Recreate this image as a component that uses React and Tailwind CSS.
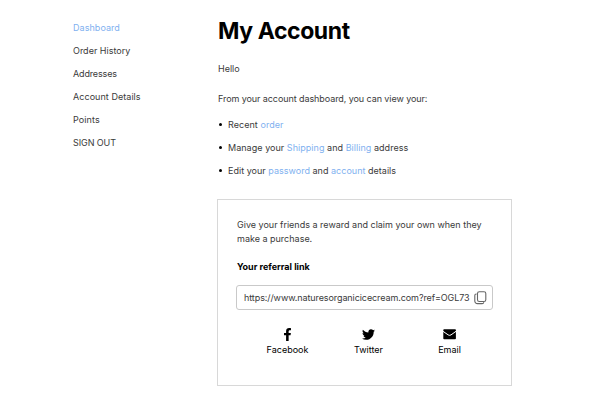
import { FaFacebookF, FaTwitter } from "react-icons/fa";

const navItems = [
  { label: "Dashboard", active: true, spacing: "tracking-[0.05px]" },
  { label: "Order History", spacing: "tracking-normal" },
  { label: "Addresses", spacing: "tracking-[-0.15px]" },
  { label: "Account Details", spacing: "tracking-[0.05px]" },
  { label: "Points", spacing: "tracking-[0.1px]" },
  { label: "SIGN OUT", spacing: "tracking-[-0.08px]" },
];

const shareItems = [
  { label: "Facebook", icon: <FaFacebookF className="h-[13px] w-[13px]" /> },
  { label: "Twitter", icon: <FaTwitter className="h-[13px] w-[13px]" /> },
  { label: "Email", icon: <EnvelopeIcon /> },
];

function Link({ children }) {
  return (
    <a href="#" className="text-[#7fb1f0]">
      {children}
    </a>
  );
}

function EnvelopeIcon() {
  return (
    <svg viewBox="0 0 13 13" className="h-[13px] w-[13px]">
      <rect x="0.3" y="1.2" width="12.6" height="10" rx="0.8" fill="#000" />
      <path
        d="M0 3.3l5.2 3.6q1.4.9 2.8 0L13 3.3"
        fill="none"
        stroke="#fff"
        strokeWidth="1"
      />
    </svg>
  );
}

function CopyIcon() {
  return (
    <svg
      viewBox="0 0 13 14"
      className="h-[14px] w-[13px] shrink-0"
      fill="none"
      stroke="#666666"
      strokeWidth="1.1"
      strokeLinecap="round"
    >
      <rect x="3.5" y="0.7" width="8.3" height="9.8" rx="1.8" />
      <path d="M2.2 3C1.2 3 .8 3.7.8 4.6V10a2.6 2.6 0 0 0 2.6 2.6h4.8c.8 0 1.4-.4 1.5-1" />
    </svg>
  );
}

export default function App() {
  return (
    <div className="flex h-[400px] w-[600px] overflow-hidden bg-white font-['Inter',sans-serif] text-[9px] text-[#3a3a3a]">
      {/* Account navigation */}
      <nav className="w-[217px] shrink-0 pt-[16px] pl-[73px]">
        <ul>
          {navItems.map((item) => (
            <li
              key={item.label}
              className={`h-[23px] leading-[23px] ${item.spacing} ${item.active ? "text-[#7fb1f0]" : ""}`}
            >
              {item.label}
            </li>
          ))}
        </ul>
      </nav>

      <main className="w-[295px] pt-[16px]">
        <h1 className="pl-px text-[23px] leading-[30px] font-bold tracking-[-0.42px] text-black">
          My Account
        </h1>
        <p className="mt-[15px] pl-px leading-[15px]">Hello</p>
        <p className="mt-[15px] pl-px leading-[15px] tracking-[-0.08px] whitespace-nowrap">
          From your account dashboard, you can view your:
        </p>
        <ul className="mt-[7px] pl-[2px] leading-[23px]">
          <li className="flex items-center gap-[6px]">
            <span className="h-[3px] w-[3px] rounded-full bg-black" />
            <span className="tracking-[0.05px]">
              Recent <Link>order</Link>
            </span>
          </li>
          <li className="flex items-center gap-[6px]">
            <span className="h-[3px] w-[3px] rounded-full bg-black" />
            <span className="tracking-[0.04px]">
              Manage your <Link>Shipping</Link> and <Link>Billing</Link> address
            </span>
          </li>
          <li className="flex items-center gap-[6px]">
            <span className="h-[3px] w-[3px] rounded-full bg-black" />
            <span className="tracking-[0.02px]">
              Edit your <Link>password</Link> and <Link>account</Link> details
            </span>
          </li>
        </ul>

        {/* Referral box */}
        <section className="mt-[17px] h-[187px] border border-[#d8d8d8] px-[18px] pt-[18px]">
          <p className="pl-px leading-[14px]">
            Give your friends a reward and claim your own when they
            <br />
            make a purchase.
          </p>
          <h2 className="mt-[13px] pl-px leading-[15px] font-bold text-black">
            Your referral link
          </h2>
          <div className="mt-[11px] flex h-[25px] items-center justify-between rounded-[3px] border border-[#c9c9c9] pr-[5px] pl-[7px]">
            <span className="tracking-[-0.09px] whitespace-nowrap">
              https://www.naturesorganicicecream.com?ref=OGL73
            </span>
            <CopyIcon />
          </div>
          <div className="mt-[18px] flex pl-[11px] text-black">
            {shareItems.map((item) => (
              <a
                key={item.label}
                href="#"
                className="flex w-[81px] flex-col items-center"
              >
                {item.icon}
                <span className="mt-[2px] leading-[14px]">{item.label}</span>
              </a>
            ))}
          </div>
        </section>
      </main>
    </div>
  );
}
